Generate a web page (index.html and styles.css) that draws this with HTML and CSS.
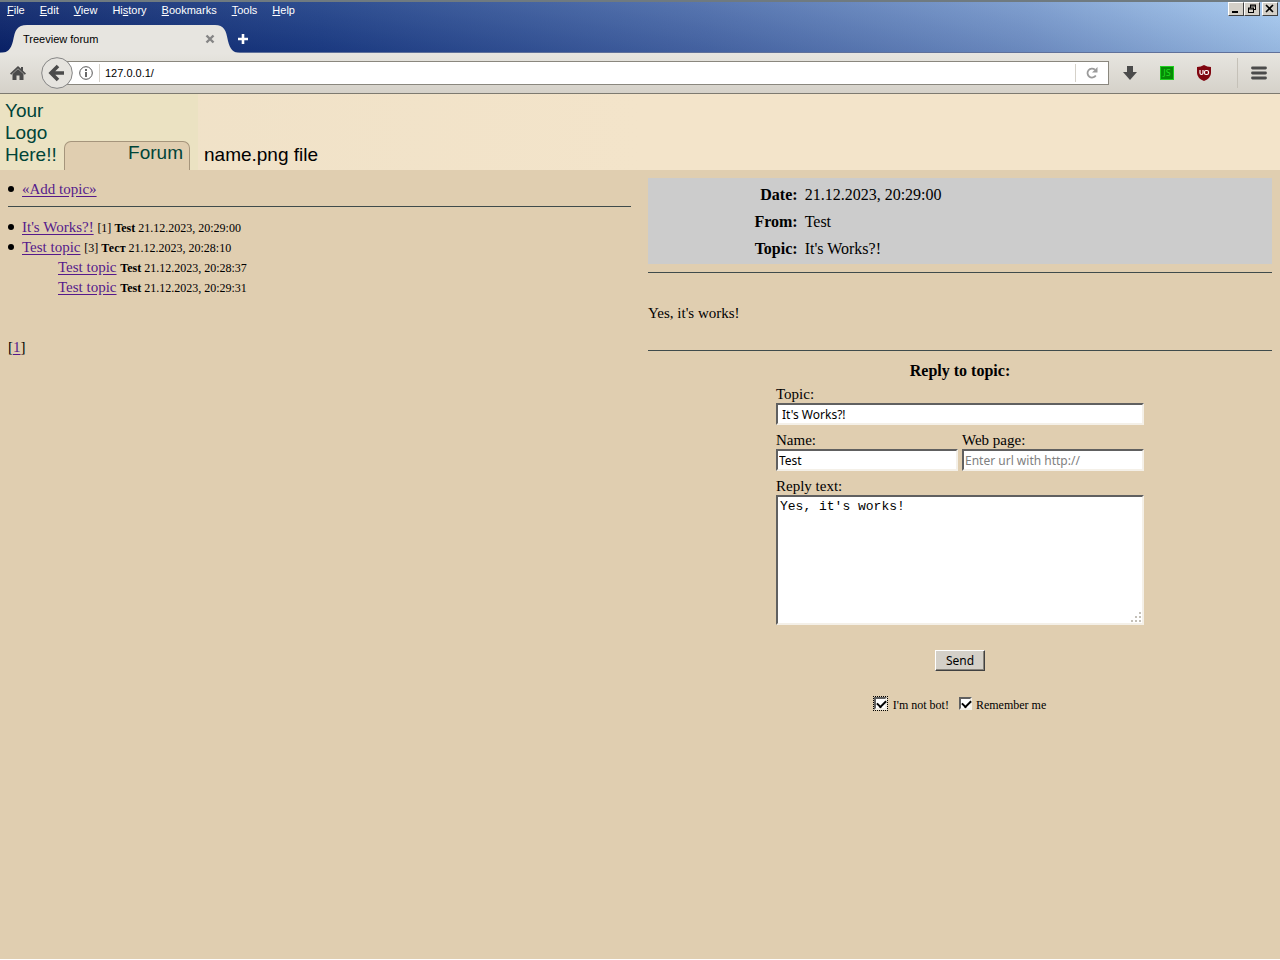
FILE: index.html
```html
<!DOCTYPE html>
<html lang="en">
<head>
    <meta charset="UTF-8">
    <meta name="viewport" content="width=device-width, initial-scale=1.0">
    <title>Treeview forum</title>
    <link rel="stylesheet" href="styles.css">
</head>
<body>
    <div class="titlebar">
        <div class="menurow">
            <nav class="menu">
                <button type="button"><u>F</u>ile</button>
                <button type="button"><u>E</u>dit</button>
                <button type="button"><u>V</u>iew</button>
                <button type="button">Hi<u>s</u>tory</button>
                <button type="button"><u>B</u>ookmarks</button>
                <button type="button"><u>T</u>ools</button>
                <button type="button"><u>H</u>elp</button>
            </nav>
            <div class="winbuttons">
                <button type="button" aria-label="Minimize"><svg width="12" height="10" viewBox="0 0 12 10"><path d="M2 8h6" stroke="#000" stroke-width="2"/></svg></button>
                <button type="button" aria-label="Restore"><svg width="12" height="10" viewBox="0 0 12 10"><path d="M4 1h6M4 2h6M4.500 1v3M9.500 1v5M8 5.500h2M2 4h6M2 5h6M2.500 4v5M7.500 4v5M2 8.500h6" fill="none" stroke="#000"/></svg></button>
                <button type="button" class="close" aria-label="Close"><svg width="12" height="10" viewBox="0 0 12 10"><path d="M2 1l7 7M9 1l-7 7" stroke="#000" stroke-width="1.600"/></svg></button>
            </div>
        </div>
        <div class="tabs">
            <div class="tab">
                <svg class="tabshape" width="240" height="29" viewBox="0 0 240 29"><path d="M0 29C8 29 11 25 13 17C15 6 17 1 27 1H215C224 1 226 6 228 17C230 25 233 29 240 29Z" fill="#e7e5e0"/></svg>
                <span>Treeview forum</span>
                <button type="button" aria-label="Close tab"><svg width="10" height="10" viewBox="0 0 10 10"><path d="M1.500 1.500l7 7M8.500 1.500l-7 7" stroke="#858585" stroke-width="2.400"/></svg></button>
            </div>
            <button type="button" class="newtab" aria-label="New tab"><svg width="12" height="12" viewBox="0 0 12 12"><path d="M6 1v10M1 6h10" stroke="#fff" stroke-width="2.600"/></svg></button>
        </div>
    </div>
    <div class="toolbar">
        <button type="button" class="home" aria-label="Home"><svg width="18" height="16" viewBox="0 0 18 16"><path d="M9 1L1 8.500L2.200 9.800L9 3.600L15.800 9.800L17 8.500L14 5.700V2H12V3.800Z" fill="#4b4b4b"/><path d="M3.500 9L9 4L14.500 9V15H10.500V10.500H7.500V15H3.500Z" fill="#4b4b4b"/></svg></button>
        <div class="location">
            <button type="button" class="back" aria-label="Back"><svg width="32" height="32" viewBox="0 0 32 32"><circle cx="16" cy="16" r="15.300" fill="#e6e4df" stroke="#858585"/><path d="M17 9L10 16L17 23M11 16H23" fill="none" stroke="#4b4b4b" stroke-width="3.600"/></svg></button>
            <div class="urlbar">
                <svg width="14" height="14" viewBox="0 0 14 14"><circle cx="7" cy="7" r="6.300" fill="none" stroke="#555"/><path d="M7 6v5M7 3v2" stroke="#444" stroke-width="1.600"/></svg>
                <input type="text" class="url" value="127.0.0.1/" aria-label="Address">
                <button type="button" class="reload" aria-label="Reload"><svg width="14" height="14" viewBox="0 0 14 14"><path d="M10.800 9.500A4.500 4.500 0 1 1 10 3.700" fill="none" stroke="#9a9a9a" stroke-width="1.800"/><path d="M12.500 1V6.500H7Z" fill="#9a9a9a"/></svg></button>
            </div>
        </div>
        <div class="addons">
            <button type="button" aria-label="Downloads"><svg width="14" height="14" viewBox="0 0 14 14"><path d="M4 0H10V6H14L7 14L0 6H4Z" fill="#4b4b4b"/></svg></button>
            <button type="button" class="js" aria-label="Toggle scripts">JS</button>
            <button type="button" aria-label="Content blocker"><svg width="14" height="16" viewBox="0 0 14 16"><path d="M7 0Q10 2 14 2V8Q14 13 7 16Q0 13 0 8V2Q4 2 7 0Z" fill="#800610"/><path d="M3 5V8Q3 9.500 4.500 9.500Q6 9.500 6 8V5" fill="none" stroke="#fff" stroke-width="1.200"/><rect x="7.500" y="5.500" width="4" height="4" rx="1.500" fill="none" stroke="#fff" stroke-width="1.200"/></svg></button>
        </div>
        <button type="button" class="hamburger" aria-label="Open menu"><svg width="16" height="14" viewBox="0 0 16 14"><path d="M1.500 2h13M1.500 7h13M1.500 12h13" stroke="#4b4b4b" stroke-width="2.800" stroke-linecap="round"/></svg></button>
    </div>

    <header class="banner">
        <div class="logo">
            <div class="logotext">Your<br>Logo<br>Here!!</div>
            <div class="forumtab">Forum</div>
        </div>
        <div class="name">name.png file</div>
    </header>

    <main class="frames">
        <section class="topics">
            <ul>
                <li><a href="#add">«Add topic»</a></li>
            </ul>
            <hr>
            <ul>
                <li><a href="#t1">It's Works?!</a> <small>[1] <b>Test</b> 21.12.2023, 20:29:00</small></li>
                <li><a href="#t2">Test topic</a> <small>[3] <b>Тест</b> 21.12.2023, 20:28:10</small>
                    <ul>
                        <li><a href="#t3">Test topic</a> <small><b>Test</b> 21.12.2023, 20:28:37</small></li>
                        <li><a href="#t4">Test topic</a> <small><b>Test</b> 21.12.2023, 20:29:31</small></li>
                    </ul>
                </li>
            </ul>
            <p class="pages">[<a href="#p1">1</a>]</p>
        </section>

        <section class="message">
            <table class="info">
                <tr><th>Date:</th><td>21.12.2023, 20:29:00</td></tr>
                <tr><th>From:</th><td>Test</td></tr>
                <tr><th>Topic:</th><td>It's Works?!</td></tr>
            </table>
            <hr>
            <p class="text">Yes, it's works!</p>
            <hr>
            <form class="reply">
                <h2>Reply to topic:</h2>
                <div class="field">
                    <label for="topic">Topic:</label>
                    <input type="text" id="topic" class="indent" value="It's Works?!">
                </div>
                <div class="pair">
                    <div class="field">
                        <label for="name">Name:</label>
                        <input type="text" id="name" value="Test">
                    </div>
                    <div class="field">
                        <label for="web">Web page:</label>
                        <input type="text" id="web" placeholder="Enter url with http://">
                    </div>
                </div>
                <div class="field">
                    <label for="text">Reply text:</label>
                    <div class="area">
                        <textarea id="text">Yes, it's works!</textarea>
                        <svg class="grip" width="10" height="10" viewBox="0 0 10 10"><path d="M8 0h2v2h-2zM4 4h2v2h-2zM8 4h2v2h-2zM0 8h2v2h-2zM4 8h2v2h-2zM8 8h2v2h-2z" fill="#c4c0b8"/></svg>
                    </div>
                </div>
                <button type="submit" class="send">Send</button>
                <div class="checks">
                    <label><input type="checkbox" class="focused" checked> I'm not bot!</label>
                    <label><input type="checkbox" checked>Remember me</label>
                </div>
            </form>
        </section>
    </main>
</body>
</html>
```
FILE: styles.css
```css
* {
    box-sizing: border-box;
}
body {
    margin: 0;
    min-height: 100vh;
    display: flex;
    flex-direction: column;
    background-color: #e0ceb0;
    border-bottom: 1px solid #ffffff;
    font-family: "Liberation Serif", "Times New Roman", serif;
    font-size: 15px;
    line-height: 20px;
    color: #000000;
}
button {
    padding: 0;
    border: 0;
    background: none;
    color: inherit;
    font: inherit;
}
svg {
    display: block;
}

/* browser window */
.titlebar {
    height: 53px;
    border-top: 2px solid #6f7a80;
    border-bottom: 1px solid #60719a;
    background: linear-gradient(to bottom, rgba(255, 255, 255, 0.08), rgba(0, 0, 60, 0.1)), linear-gradient(to right, #0a246a 0%, #1d3f87 25%, #4a6baa 55%, #7597cb 80%, #a6caf0 100%);
    color: #ffffff;
    font-family: "Liberation Sans", Tahoma, sans-serif;
    font-size: 11px;
}
.menurow {
    display: flex;
    justify-content: space-between;
    height: 22px;
}
.menu {
    display: flex;
    gap: 15px;
    padding-left: 7px;
    line-height: 16px;
}
.menu button {
    height: 16px;
}
.winbuttons {
    display: flex;
    height: 14px;
    padding-right: 2px;
}
.winbuttons button {
    width: 16px;
    padding-left: 1px;
    border: 1px solid;
    border-color: #ffffff #404040 #404040 #ffffff;
    background-color: #d4d0c8;
}
.winbuttons .close {
    margin-left: 2px;
}
.tabs {
    display: flex;
    align-items: center;
    height: 29px;
}
.tab {
    position: relative;
    display: flex;
    align-items: center;
    justify-content: space-between;
    width: 237px;
    height: 29px;
    padding: 0 22px 0 23px;
    color: #000000;
}
.tabshape {
    position: absolute;
    left: 0;
    top: 0;
}
.tab span, .tab button {
    position: relative;
}
.toolbar {
    display: flex;
    align-items: center;
    height: 41px;
    padding-left: 9px;
    border-bottom: 1px solid #7d7a70;
    background: linear-gradient(to bottom, #e7e5e0, #d5d1c9);
}
.location {
    display: flex;
    align-items: center;
    flex: 1;
    margin-left: 14px;
}
.back {
    position: relative;
    z-index: 1;
}
.urlbar {
    display: flex;
    align-items: center;
    flex: 1;
    height: 24px;
    margin-left: -6px;
    padding-left: 11px;
    border: 1px solid #8a877e;
    background-color: #ffffff;
}
.url {
    flex: 1;
    height: 18px;
    margin-left: 6px;
    padding: 0 5px;
    border: 0;
    border-left: 1px solid #d5d1c9;
    border-right: 1px solid #d5d1c9;
    font-family: "Liberation Sans", Tahoma, sans-serif;
    font-size: 11px;
}
.reload {
    padding: 0 9px;
}
.addons {
    display: flex;
    align-items: center;
    gap: 23px;
    padding: 0 26px 0 14px;
}
.js {
    width: 14px;
    height: 14px;
    border: 1px solid #1fd01f;
    background-color: #068a06;
    color: #22dd22;
    font-family: "Noto Sans", sans-serif;
    font-size: 9px;
    line-height: 12px;
}
.hamburger {
    padding: 8px 13px;
    border-left: 1px solid #c5c1b8;
}

/* forum header */
.banner {
    display: flex;
    align-items: stretch;
    height: 76px;
    background: linear-gradient(to right, #efe1c7, #f3e4ca 50%);
    font-family: "Liberation Sans", Arial, sans-serif;
    font-size: 19px;
    line-height: 22px;
}
.logo {
    display: flex;
    align-items: flex-end;
    width: 198px;
    background-color: #ebe2c2;
    color: #004438;
}
.logotext {
    width: 64px;
    padding: 0 0 4px 5px;
}
.forumtab {
    width: 126px;
    height: 29px;
    padding-right: 6px;
    border: 1px solid #a5957c;
    border-bottom: 0;
    border-radius: 7px 7px 0 0;
    background-color: #e0ceb0;
    text-align: right;
}
.name {
    align-self: flex-end;
    padding: 0 0 4px 6px;
}

/* frames */
.frames {
    display: grid;
    grid-template-columns: 1fr 1fr;
}
.topics {
    padding: 9px 9px 8px 8px;
}
.message {
    padding: 8px;
}
hr {
    margin: 8px 0;
    border: 0;
    border-top: 1px solid #3f4b4b;
}
a {
    color: #551a8b;
    text-underline-offset: 2px;
}
small {
    font-size: 12px;
    line-height: 12px;
}
.topics hr {
    margin: 7px 0 10px;
}
.topics ul {
    margin: 0;
    padding-left: 14px;
    list-style: none;
}
.topics > ul > li::before {
    content: "";
    float: left;
    width: 6px;
    height: 6px;
    margin: 7px 0 0 -14px;
    border-radius: 50%;
    background-color: #000000;
}
.topics ul ul {
    padding-left: 36px;
}
.pages {
    margin: 40px 0 0;
}
.info {
    width: 100%;
    padding: 2px 2px 1px;
    border-spacing: 3px 2px;
    background-color: #cccccc;
    font-size: 16px;
}
.info th, .info td {
    padding: 2px;
    line-height: 21px;
}
.info th {
    width: 24%;
    text-align: right;
}
.text {
    margin: 30px 0 27px;
}
.reply {
    display: flex;
    flex-direction: column;
    width: 368px;
    max-width: 100%;
    margin: 10px auto 0;
}
.reply h2 {
    margin: 0 0 4px;
    font-size: 16px;
    text-align: center;
}
.field {
    display: flex;
    flex-direction: column;
    flex: 1;
    min-width: 0;
    margin-bottom: 6px;
}
.field label {
    line-height: 18px;
}
.pair {
    display: flex;
    gap: 4px;
}
.field input, .field textarea {
    width: 100%;
    margin: 0;
    border: 2px solid;
    border-color: #606060 #f4f0e8 #f4f0e8 #606060;
    background-color: #ffffff;
    color: #000000;
}
.field input {
    height: 22px;
    padding: 0 1px;
    font-family: "Noto Sans", sans-serif;
    font-size: 12px;
}
.field .indent {
    padding-left: 4px;
}
.field input::placeholder {
    color: #808080;
}
.area {
    position: relative;
}
.field textarea {
    display: block;
    height: 130px;
    padding: 2px 2px 0;
    resize: none;
    font-family: "Liberation Mono", "Courier New", monospace;
    font-size: 13px;
    line-height: 16px;
}
.grip {
    position: absolute;
    right: 3px;
    bottom: 3px;
}
.send {
    align-self: center;
    width: 50px;
    height: 21px;
    margin: 19px 0 24px;
    border: 1px solid;
    border-color: #ffffff #404040 #404040 #ffffff;
    box-shadow: inset -1px -1px #87837b;
    background-color: #d4d0c8;
    font-family: "Noto Sans", sans-serif;
    font-size: 12px;
    line-height: 18px;
}
.checks {
    display: flex;
    justify-content: center;
    gap: 10px;
    font-size: 12px;
}
.checks label {
    display: flex;
    align-items: center;
    gap: 4px;
}
.checks .focused {
    margin-right: 2px;
    outline: 1px dotted #000000;
}
.checks input {
    appearance: none;
    width: 13px;
    height: 13px;
    margin: 0 0 4px;
    border: 2px solid;
    border-color: #606060 #f4f0e8 #f4f0e8 #606060;
    background-color: #ffffff;
}
.checks input:checked::before {
    content: "";
    display: block;
    width: 7px;
    height: 4px;
    margin: 1px;
    border: solid #000000;
    border-width: 0 0 2px 2px;
    transform: rotate(-45deg);
}
```
